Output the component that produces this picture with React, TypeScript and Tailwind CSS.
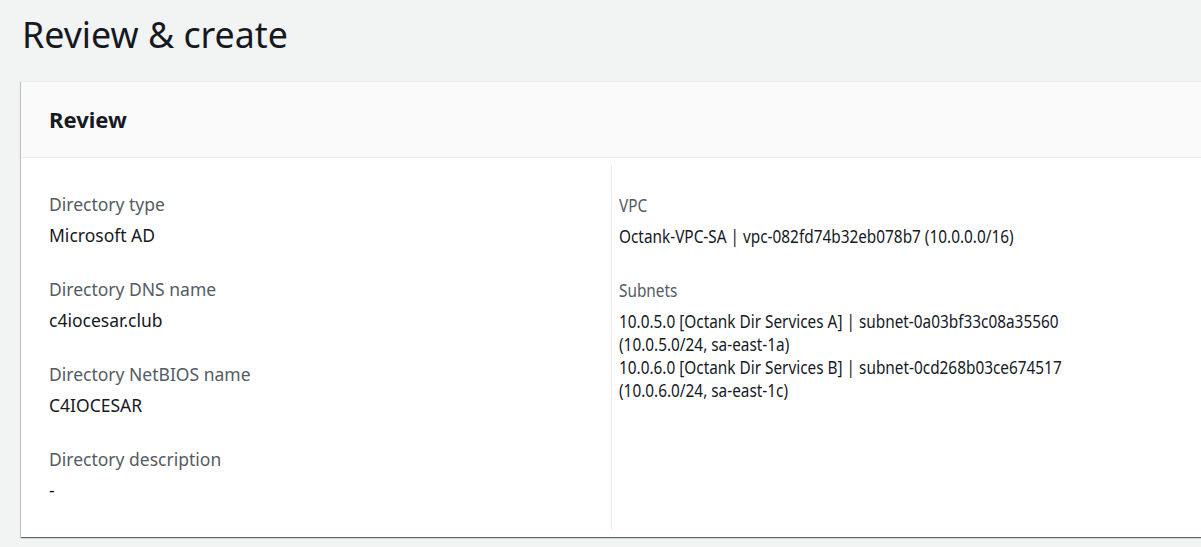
import React from "react";

const LeftItem = ({ label, children }: { label: string; children: React.ReactNode }) => (
  <div className="flex flex-col gap-[8px]">
    <div className="text-[17.5px] leading-[23px] text-[#545b64]">{label}</div>
    <div className="text-[17.5px] leading-[23px] text-[#16191f]">{children}</div>
  </div>
);

const RightItem = ({ label, children }: { label: string; children: React.ReactNode }) => (
  <div className="flex flex-col gap-[8px] origin-left scale-x-[0.83]">
    <div className="text-[18.5px] leading-[23px] text-[#545b64]">{label}</div>
    <div className="text-[18.5px] leading-[23px] text-[#16191f]">{children}</div>
  </div>
);

export default function App() {
  return (
    <div
      className="w-[1201px] h-[547px] overflow-hidden bg-[#f2f3f3] pl-[21px] pt-[14px]"
      style={{ fontFamily: '"Noto Sans", "Open Sans", sans-serif' }}
    >
      <h1 className="text-[35.75px] leading-[40px] font-normal text-[#16191f] pl-[1px]">Review &amp; create</h1>
      <div className="mt-[27px] w-[1260px] bg-white border-t border-[#eaeded] shadow-[0_1px_1px_0_rgba(0,28,36,0.5),1px_1px_1px_0_rgba(0,28,36,0.15),-1px_1px_1px_0_rgba(0,28,36,0.15)]">
        <div className="h-[76px] bg-[#fafafa] border-b border-[#eaeded] pl-[28px] pb-[2px] flex items-center">
          <h2 className="text-[22px] leading-[28px] font-bold text-[#16191f]">Review</h2>
        </div>
        <div className="flex pt-[7px] pb-[7px]">
          <div className="w-[590px] pl-[28px] pt-[28px] pb-[28px] flex flex-col gap-[31px]">
            <LeftItem label="Directory type">Microsoft AD</LeftItem>
            <LeftItem label="Directory DNS name">c4iocesar.club</LeftItem>
            <LeftItem label="Directory NetBIOS name">C4IOCESAR</LeftItem>
            <LeftItem label="Directory description">-</LeftItem>
          </div>
          <div className="flex-1 border-l border-[#eaeded] pl-[7px] pt-[28px] pb-[28px] flex flex-col gap-[31px]">
            <RightItem label="VPC">Octank-VPC-SA | vpc-082fd74b32eb078b7 (10.0.0.0/16)</RightItem>
            <RightItem label="Subnets">
              <div>10.0.5.0 [Octank Dir Services A] | subnet-0a03bf33c08a35560</div>
              <div>(10.0.5.0/24, sa-east-1a)</div>
              <div>10.0.6.0 [Octank Dir Services B] | subnet-0cd268b03ce674517</div>
              <div>(10.0.6.0/24, sa-east-1c)</div>
            </RightItem>
          </div>
        </div>
      </div>
    </div>
  );
}
